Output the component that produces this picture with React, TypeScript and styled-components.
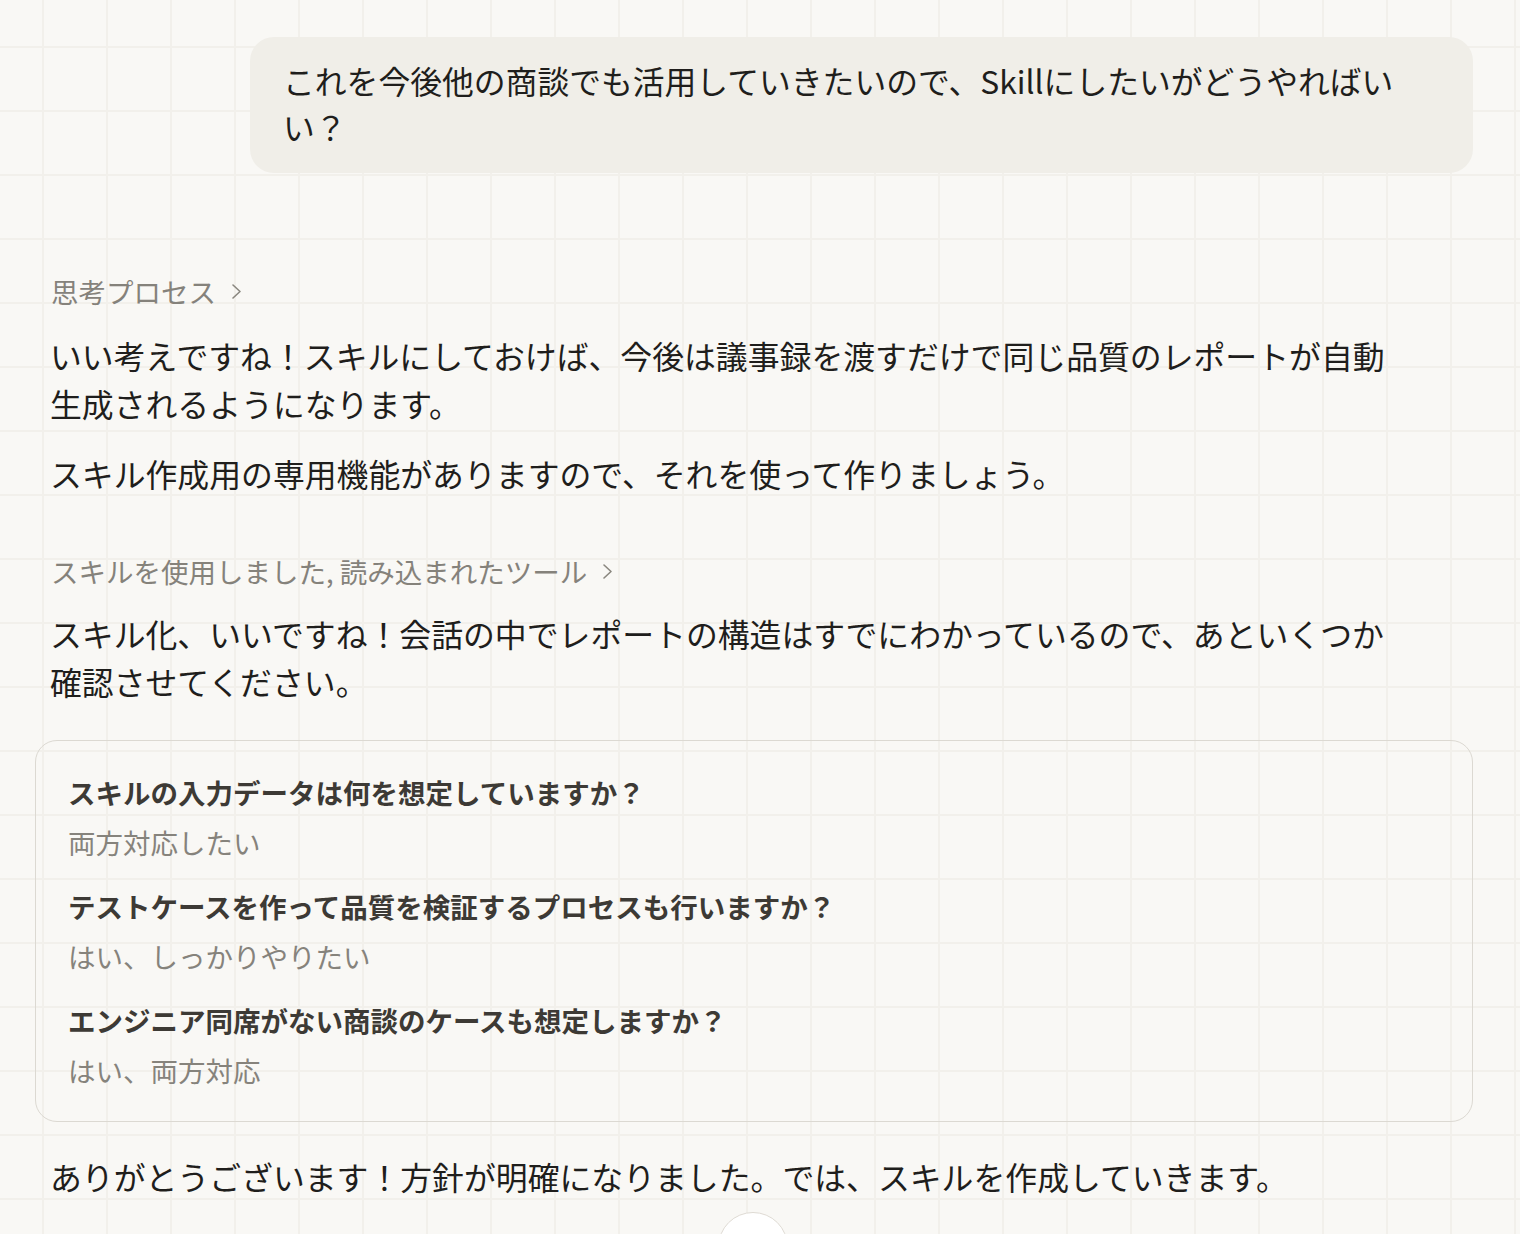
import React from "react";
import styled, { createGlobalStyle } from "styled-components";

const GlobalStyle = createGlobalStyle`
  html, body {
    margin: 0;
    padding: 0;
    min-height: 100%;
  }
  body {
    min-height: 100vh;
    background-color: #f9f8f5;
    background-image:
      linear-gradient(to right, #f2f0eb 2px, transparent 2px),
      linear-gradient(to bottom, #f2f0eb 2px, transparent 2px);
    background-size: 64px 64px;
    background-position: 42px 46px;
    font-family: "Noto Sans CJK JP", "Noto Sans", sans-serif;
    color: #1f1e1c;
  }
`;

const Page = styled.main`
  width: 1438px;
  margin-left: 35px;
  padding-top: 37px;
  padding-bottom: 32px;
  display: flex;
  flex-direction: column;
`;

const UserRow = styled.div`
  display: flex;
  justify-content: flex-end;
`;

const Bubble = styled.div`
  width: 1157px;
  padding: 20px 33px 24px;
  background: #f0eee8;
  border-radius: 24px;
  font-size: 31.8px;
  line-height: 46px;
  color: #1f1e1c;
  line-break: strict;
`;

const Assistant = styled.section`
  margin-top: 98px;
  display: flex;
  flex-direction: column;
`;

const Label = styled.div<{ $top?: number }>`
  display: flex;
  align-items: center;
  padding-left: 16px;
  margin-top: ${(p) => p.$top ?? 0}px;
  font-size: 27.5px;
  line-height: 40px;
  color: #85827b;
`;

const Chevron = styled.svg`
  margin-left: 15px;
  width: 11px;
  height: 17px;
`;

const Para = styled.p<{ $top?: number }>`
  margin: ${(p) => p.$top ?? 22}px 0 0;
  padding-left: 15px;
  max-width: 1345px;
  font-size: 31.85px;
  line-height: 48px;
  color: #1f1e1c;
  line-break: strict;
`;

const Card = styled.div`
  margin-top: 35px;
  border: 1px solid #dcd9d2;
  border-radius: 22px;
  padding: 31px 32px 31px;
  display: flex;
  flex-direction: column;
  gap: 24px;
`;

const QA = styled.div`
  display: flex;
  flex-direction: column;
  gap: 10px;
`;

const Question = styled.div`
  font-size: 27.5px;
  line-height: 40px;
  font-weight: 600;
  color: #3d3a35;
`;

const Answer = styled.div`
  font-size: 27.5px;
  line-height: 40px;
  color: #86837c;
`;

const ScrollButton = styled.button`
  position: fixed;
  left: 718px;
  top: 1212px;
  width: 70px;
  height: 70px;
  border-radius: 50%;
  background: #ffffff;
  border: 1px solid #dedad3;
  padding: 0;
  display: flex;
  align-items: center;
  justify-content: center;
  color: #3d3a35;
`;

const ChevronIcon = () => (
  <Chevron viewBox="0 0 11 17" fill="none">
    <polyline points="2,2 9,8.5 2,15" stroke="#8a877f" strokeWidth="1.6" strokeLinecap="round" strokeLinejoin="round" />
  </Chevron>
);

const qas = [
  { q: "スキルの入力データは何を想定していますか？", a: "両方対応したい" },
  { q: "テストケースを作って品質を検証するプロセスも行いますか？", a: "はい、しっかりやりたい" },
  { q: "エンジニア同席がない商談のケースも想定しますか？", a: "はい、両方対応" },
];

export default function App() {
  return (
    <>
      <GlobalStyle />
      <Page>
        <UserRow>
          <Bubble>
            これを今後他の商談でも活用していきたいので、Skillにしたいがどうやればいい？
          </Bubble>
        </UserRow>
        <Assistant>
          <Label>
            思考プロセス
            <ChevronIcon />
          </Label>
          <Para $top={20}>
            いい考えですね！スキルにしておけば、今後は議事録を渡すだけで同じ品質のレポートが自動生成されるようになります。
          </Para>
          <Para>スキル作成用の専用機能がありますので、それを使って作りましょう。</Para>
          <Label $top={54}>
            スキルを使用しました, 読み込まれたツール
            <ChevronIcon />
          </Label>
          <Para $top={18}>
            スキル化、いいですね！会話の中でレポートの構造はすでにわかっているので、あといくつか確認させてください。
          </Para>
          <Card>
            {qas.map((item) => (
              <QA key={item.q}>
                <Question>{item.q}</Question>
                <Answer>{item.a}</Answer>
              </QA>
            ))}
          </Card>
          <Para $top={30}>
            ありがとうございます！方針が明確になりました。では、スキルを作成していきます。
          </Para>
        </Assistant>
      </Page>
      <ScrollButton aria-label="scroll down">
        <svg width="24" height="24" viewBox="0 0 24 24" fill="none" stroke="currentColor" strokeWidth="2">
          <path d="M12 5v14M5 12l7 7 7-7" />
        </svg>
      </ScrollButton>
    </>
  );
}
